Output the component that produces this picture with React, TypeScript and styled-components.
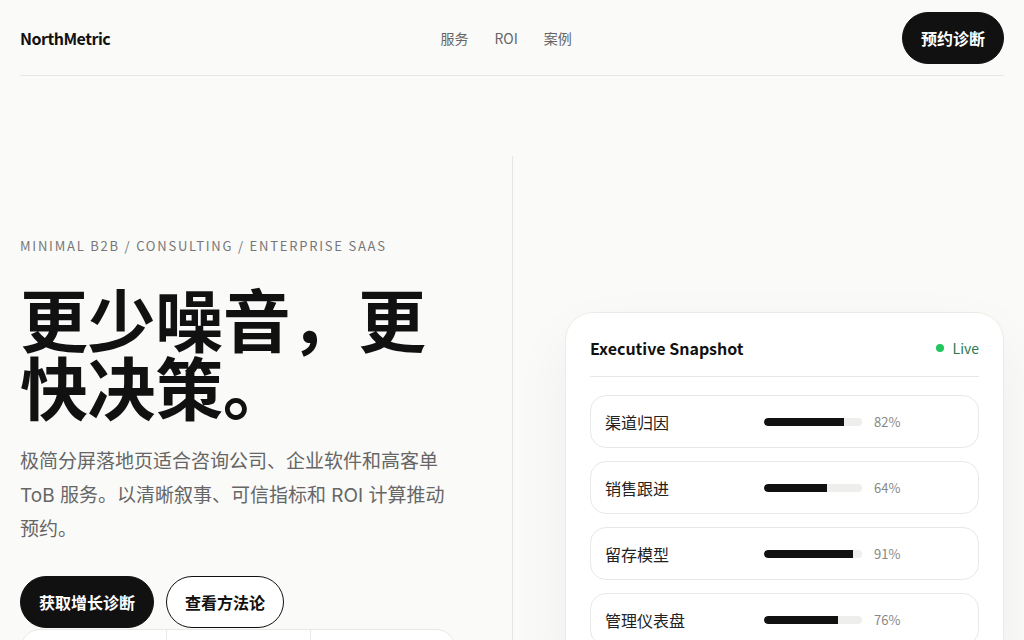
import React from "react";
import styled, { createGlobalStyle } from "styled-components";

const GlobalStyle = createGlobalStyle`
  * { box-sizing: border-box; }
  html, body {
    margin: 0;
    padding: 0;
    background: #fafaf8;
    color: #111;
    font-family: "Noto Sans CJK SC", "Noto Sans", sans-serif;
  }
`;

const metrics = [
  { label: "渠道归因", value: 82 },
  { label: "销售跟进", value: 64 },
  { label: "留存模型", value: 91 },
  { label: "管理仪表盘", value: 76 }
];

const stats = [
  { value: "3.2x", label: "平均 ROI" },
  { value: "42%", label: "线索转化提升" },
  { value: "14 天", label: "上线周期" }
];

export default function App() {
  return (
    <>
      <GlobalStyle />
      <Page>
        <Header>
          <Logo>NorthMetric</Logo>
          <Nav>
            <NavLink href="#">服务</NavLink>
            <NavLink href="#">ROI</NavLink>
            <NavLink href="#">案例</NavLink>
          </Nav>
          <PillButton $dark>预约诊断</PillButton>
        </Header>

        <Hero>
          <LeftCol>
            <Eyebrow>MINIMAL B2B / CONSULTING / ENTERPRISE SAAS</Eyebrow>
            <Headline>更少噪音，更快决策。</Headline>
            <Lead>
              极简分屏落地页适合咨询公司、企业软件和高客单 ToB 服务。以清晰叙事、可信指标和 ROI 计算推动预约。
            </Lead>
            <Actions>
              <PillButton $dark>获取增长诊断</PillButton>
              <PillButton>查看方法论</PillButton>
            </Actions>
            <StatsRow>
              {stats.map((s) => (
                <StatCell key={s.label}>
                  <StatValue>{s.value}</StatValue>
                  <StatLabel>{s.label}</StatLabel>
                </StatCell>
              ))}
            </StatsRow>
          </LeftCol>

          <RightCol>
            <Card>
              <CardHead>
                <CardTitle>Executive Snapshot</CardTitle>
                <LiveTag>
                  <Dot />
                  Live
                </LiveTag>
              </CardHead>
              <MetricList>
                {metrics.map((m) => (
                  <MetricRow key={m.label}>
                    <MetricLabel>{m.label}</MetricLabel>
                    <Track>
                      <Fill style={{ width: `${m.value}%` }} />
                    </Track>
                    <Percent>{m.value}%</Percent>
                  </MetricRow>
                ))}
              </MetricList>
            </Card>
          </RightCol>
        </Hero>
      </Page>
    </>
  );
}

const Page = styled.div`
  padding: 0 20px;
  min-height: 100vh;
`;

const Header = styled.header`
  display: flex;
  align-items: center;
  justify-content: space-between;
  padding: 12px 0 11px;
  border-bottom: 1px solid #e6e6e3;
`;

const Logo = styled.div`
  font-size: 16px;
  font-weight: 700;
  letter-spacing: -0.5px;
`;

const Nav = styled.nav`
  display: flex;
  gap: 26px;
`;

const NavLink = styled.a`
  font-size: 14px;
  color: #666;
  text-decoration: none;
`;

const PillButton = styled.button<{ $dark?: boolean }>`
  height: 52px;
  padding: 0 18px;
  border-radius: 999px;
  border: 1px solid #111;
  background: ${(p) => (p.$dark ? "#111" : "#fff")};
  color: ${(p) => (p.$dark ? "#fff" : "#111")};
  font-family: "Noto Sans CJK SC", sans-serif;
  font-size: 16px;
  font-weight: 700;
  cursor: pointer;
`;

const Hero = styled.section`
  display: grid;
  grid-template-columns: 1fr 1fr;
  padding-top: 80px;
`;

const LeftCol = styled.div`
  padding-top: 80px;
  padding-right: 40px;
`;

const Eyebrow = styled.div`
  font-size: 13px;
  line-height: 20px;
  letter-spacing: 1.78px;
  color: #777;
`;

const Headline = styled.h1`
  margin: 28px 0 0;
  font-size: 68px;
  line-height: 68px;
  font-weight: 700;
  letter-spacing: -0.4px;
  color: #111;
  max-width: 440px;
`;

const Lead = styled.p`
  margin: 25px 0 0;
  max-width: 441px;
  font-family: Inter, "Noto Sans CJK SC", sans-serif;
  font-size: 19px;
  line-height: 34px;
  color: #666;
`;

const Actions = styled.div`
  display: flex;
  gap: 12px;
  margin-top: 29px;
`;

const StatsRow = styled.div`
  display: grid;
  grid-template-columns: repeat(3, 1fr);
  width: 436px;
  margin-top: 1px;
  background: #fff;
  border: 1px solid #e8e8e5;
  border-radius: 20px;
  overflow: hidden;
`;

const StatCell = styled.div`
  padding: 22px 18px 18px;
  & + & {
    border-left: 1px solid #e8e8e5;
  }
`;

const StatValue = styled.div`
  font-size: 24px;
  font-weight: 700;
`;

const StatLabel = styled.div`
  font-size: 13px;
  color: #777;
`;

const RightCol = styled.div`
  border-left: 1px solid #e6e6e3;
  padding: 156px 0 0 52px;
`;

const Card = styled.div`
  background: #fff;
  border: 1px solid #ecebe8;
  border-radius: 28px;
  padding: 23px 24px 24px;
  box-shadow: 0 24px 60px rgba(0, 0, 0, 0.05);
`;

const CardHead = styled.div`
  display: flex;
  align-items: center;
  justify-content: space-between;
  padding-bottom: 16px;
  border-bottom: 1px solid #e8e8e5;
`;

const CardTitle = styled.div`
  font-size: 16px;
  font-weight: 700;
  color: #111;
`;

const LiveTag = styled.div`
  display: flex;
  align-items: center;
  gap: 9px;
  font-size: 14px;
  color: #2d7a4e;
`;

const Dot = styled.span`
  width: 8px;
  height: 8px;
  border-radius: 50%;
  background: #22c55e;
`;

const MetricList = styled.div`
  display: flex;
  flex-direction: column;
  gap: 13px;
  margin-top: 18px;
`;

const MetricRow = styled.div`
  display: flex;
  align-items: center;
  height: 53px;
  padding: 0 14px;
  border: 1px solid #e8e8e5;
  border-radius: 16px;
`;

const MetricLabel = styled.div`
  width: 159px;
  font-size: 16px;
  color: #222;
`;

const Track = styled.div`
  width: 98px;
  height: 8px;
  border-radius: 4px;
  background: #eeeeec;
  overflow: hidden;
`;

const Fill = styled.div`
  height: 100%;
  background: #111;
  border-radius: 4px 0 0 4px;
`;

const Percent = styled.div`
  margin-left: 12px;
  font-size: 13px;
  color: #888;
`;
